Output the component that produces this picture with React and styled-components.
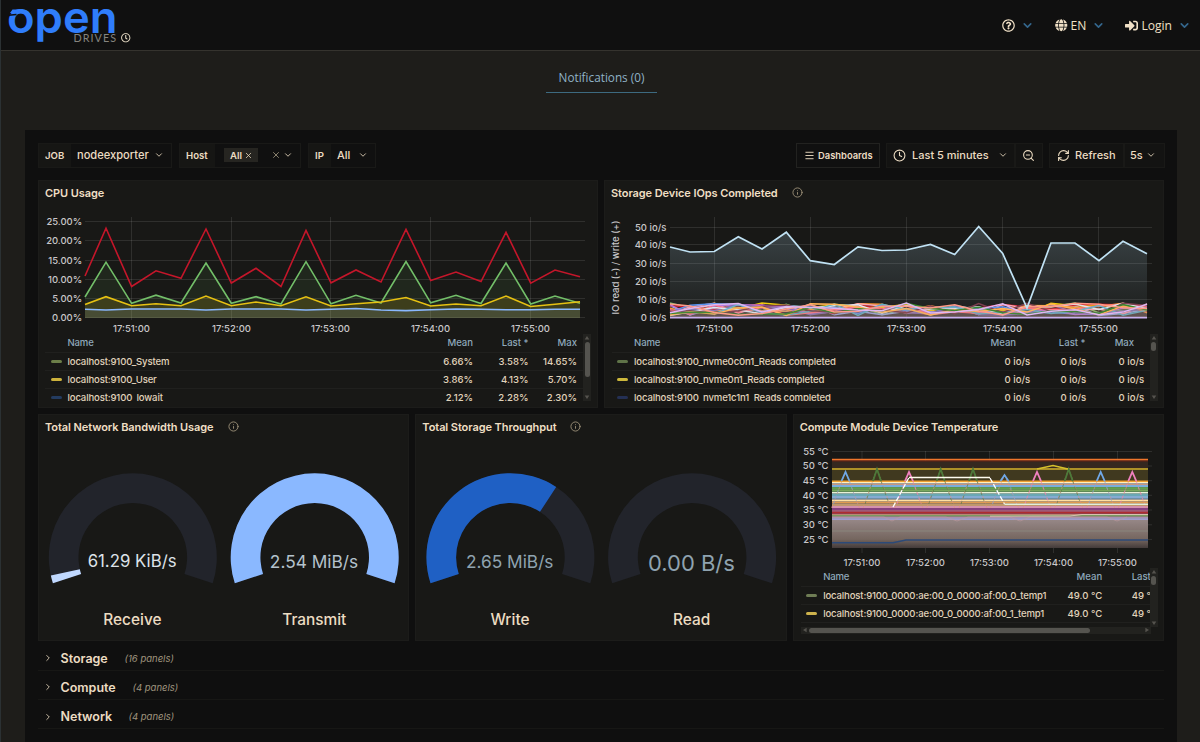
import React from "react";
import styled, { createGlobalStyle } from "styled-components";
import {
  FaRegQuestionCircle,
  FaGlobe,
  FaSignInAlt,
  FaRegClock,
} from "react-icons/fa";
import {
  ChevronDown,
  ChevronRight,
  Clock,
  Info,
  Menu,
  RefreshCw,
  X,
  ZoomOut,
} from "lucide-react";

const GlobalStyle = createGlobalStyle`
  * {
    box-sizing: border-box;
  }
  body {
    margin: 0;
    height: 742px;
    overflow: hidden;
    background: #1e1d1a;
    color: #e8d9bf;
    font-family: Inter, "Liberation Sans", sans-serif;
  }
  svg {
    display: block;
    flex: none;
  }
`;

const Page = styled.div`
  width: 1200px;
  height: 742px;
  overflow: hidden;
  display: flex;
  flex-direction: column;
  border-left: 1px solid #2b3133;
`;

const Header = styled.header`
  height: 51px;
  flex: none;
  display: flex;
  justify-content: space-between;
  background: #101010;
  border-bottom: 1px solid #35332e;
`;

const Brand = styled.div`
  display: flex;
`;

const LogoSvg = styled.svg`
  overflow: visible;
`;

const BrandClock = styled.div`
  padding-top: 33px;
  color: #efe3cc;
`;

const HeaderMenu = styled.nav`
  display: flex;
  align-items: center;
  height: 51px;
  padding-right: 9px;
  font-family: "Open Sans", "Noto Sans", sans-serif;
  font-size: 12.1px;
`;

const MenuItem = styled.div`
  display: flex;
  align-items: center;
  gap: ${(props) => props.$gap || 0}px;
  margin-left: ${(props) => props.$left || 0}px;
  color: #f0e0c6;
`;

const MenuChevron = styled(ChevronDown)`
  color: #34668c;
  margin-left: ${(props) => props.$left}px;
`;

const Tabs = styled.div`
  display: flex;
  justify-content: center;
  height: 79px;
  flex: none;
  padding: 15px 0 0 2px;
`;

const Tab = styled.div`
  width: 111px;
  height: 27px;
  padding-top: 2px;
  text-align: center;
  font: 11.75px/18px "Open Sans", "Noto Sans", sans-serif;
  color: #8fb2c6;
  border-bottom: 1px solid #3d6a80;
  white-space: nowrap;
`;

const Dashboard = styled.main`
  flex: 1;
  margin: 0 23px 0 24px;
  padding: 13px 12px 0 13px;
  background: #0f0f0f;
`;

const Toolbar = styled.div`
  display: flex;
  height: 25px;
  margin-bottom: 12px;
`;

const Control = styled.div`
  display: flex;
  align-items: center;
  height: 25px;
  width: ${(props) => props.$width}px;
  margin-left: ${(props) => props.$left || 0}px;
  padding-left: ${(props) => props.$pad || 0}px;
  padding-bottom: 1px;
  border: 1px solid ${(props) => props.$border || "#191917"};
  background: ${(props) => props.$bg || "#101010"};
  color: #ecdcc2;
  font-size: ${(props) => props.$size || 11}px;
  font-weight: ${(props) => props.$weight || 500};
  white-space: nowrap;
`;

const ControlLabel = styled.div`
  width: ${(props) => props.$width}px;
  height: 23px;
  padding-left: 6px;
  background: #161614;
  font-size: 9.6px;
  font-weight: 600;
  line-height: 23px;
`;

const ControlValue = styled.div`
  flex: 1;
  padding-left: ${(props) => props.$pad}px;
`;

const Chip = styled.div`
  display: flex;
  align-items: center;
  gap: 2px;
  width: 34px;
  height: 14px;
  margin: 0 13px 0 9px;
  padding-left: 6px;
  background: #262521;
  font-size: 9.6px;
  font-weight: 600;
`;

const Spacer = styled.div`
  flex: 1;
`;

const IconSlot = styled.div`
  margin-left: ${(props) => props.$left || 0}px;
  margin-right: ${(props) => props.$right || 0}px;
  color: ${(props) => props.$color || "inherit"};
`;

const PanelRow = styled.div`
  display: grid;
  grid-template-columns: repeat(${(props) => props.$cols}, 1fr);
  gap: 6px;
  width: 1126px;
  margin-bottom: ${(props) => props.$bottom}px;
`;

const PanelBox = styled.section`
  height: ${(props) => props.$height}px;
  min-width: 0;
  overflow: hidden;
  background: #181816;
  border: 1px solid #1c1c1a;
`;

const PanelTitle = styled.h2`
  display: flex;
  align-items: center;
  gap: 14px;
  height: 25px;
  margin: 0;
  padding: 0 0 2px 6px;
  font-size: 11px;
  font-weight: 600;
  letter-spacing: -0.08px;
  color: #efdfc4;
  svg {
    color: #9c9078;
  }
`;

const LegendArea = styled.div`
  display: flex;
  width: ${(props) => props.$width}px;
  height: ${(props) => props.$height}px;
  margin-left: ${(props) => props.$left || 6}px;
`;

const LegendTable = styled.div`
  flex: 1;
  min-width: 0;
  overflow: hidden;
`;

const LegendRow = styled.div`
  display: flex;
  align-items: center;
  height: ${(props) => (props.$head ? 18.6 : 18.2)}px;
  padding-left: 5.5px;
  border-bottom: 1px solid #20201e;
  font-size: 9.55px;
  font-weight: 500;
  color: ${(props) => (props.$head ? "#8fa9bb" : "#e0d3bb")};
  white-space: nowrap;
`;

const Swatch = styled.div`
  width: 11px;
  height: 3px;
  margin-right: 6px;
  border-radius: 2px;
  background: ${(props) => props.$color};
`;

const LegendName = styled.div`
  flex: 1;
  letter-spacing: -0.14px;
`;

const LegendCell = styled.div`
  flex: none;
  width: ${(props) => props.$width}px;
  padding-right: ${(props) => props.$pad || 0}px;
  text-align: ${(props) => props.$align || "right"};
`;

const ScrollTrack = styled.div`
  display: flex;
  flex-direction: ${(props) => (props.$horizontal ? "row" : "column")};
  align-items: center;
  justify-content: space-between;
  width: ${(props) => props.$width}px;
  height: ${(props) => props.$height}px;
  margin-left: ${(props) => props.$left || 0}px;
  background: #22221f;
  svg {
    fill: #55534e;
  }
`;

const ScrollThumb = styled.div`
  width: ${(props) => props.$width}px;
  height: ${(props) => props.$height}px;
  border-radius: 3px;
  background: #55544f;
`;

const CollapsedRow = styled.div`
  display: flex;
  align-items: center;
  width: 1126px;
  height: 29.3px;
  padding: 5px 0 0 5px;
  border-bottom: 1px solid #171715;
  font-size: 12.5px;
  font-weight: 600;
  color: #ecdcc2;
`;

const RowName = styled.span`
  width: ${(props) => props.$width}px;
  margin-left: 7.5px;
`;

const RowCount = styled.span`
  font-size: 9.5px;
  font-weight: 400;
  font-style: italic;
  color: #a0967f;
`;

const CPU_X = [
  85, 106, 131.6, 156, 181, 206, 231.3, 256, 281, 306, 331, 356, 381, 406,
  430.7, 456, 481, 506, 530.7, 555, 580,
];
const CPU_SERIES = [
  {
    color: "#c4162a",
    fill: "none",
    y: [
      276, 228.3, 286.5, 270.8, 278.3, 229, 283, 268.3, 286.5, 230.5, 282.8,
      270, 282, 229.3, 280.5, 272, 281.5, 232.3, 283.2, 270, 276.8,
    ],
  },
  {
    color: "#73bf69",
    fill: "#73bf6918",
    y: [
      297, 262.2, 303.3, 295.2, 303, 263, 303.3, 296.7, 304, 261.7, 303.8, 295.3,
      303, 261.5, 302.8, 295.3, 303.5, 263, 304, 296, 303.2,
    ],
  },
  {
    color: "#e6c112",
    fill: "#e6c11226",
    y: [
      304.5, 296.7, 305.8, 303.8, 305.8, 296, 305.8, 302, 305.8, 296.8, 306,
      303.7, 302, 297.5, 306, 304, 305.8, 296, 306.5, 304.3, 301.7,
    ],
  },
  {
    color: "#8ab8ff",
    fill: "#73899a33",
    y: [
      309.2, 310, 309, 309, 309, 310, 309, 309, 309, 310, 309.3, 308.5, 310,
      310.6, 309.8, 309, 309.2, 309.8, 309.7, 309.2, 309.2,
    ],
  },
];

const IO_X = [
  670, 690, 714.3, 738.3, 762, 786.3, 810.3, 834.3, 858, 882, 906.3, 930.5, 954.7,
  978.7, 1002.7, 1027, 1051, 1075, 1099, 1123, 1147,
];
const IO_MAIN = [
  247, 252, 251.5, 236.7, 249, 232.2, 260.7, 264.5, 246.8, 250.5, 250, 244.5,
  254.5, 226.5, 253.5, 308, 243, 243, 260.7, 241.3, 253.7,
];
const IO_COLORS = [
  "#73bf69",
  "#f2cc0c",
  "#8ab8ff",
  "#c4162a",
  "#ff9830",
  "#ffa6b0",
  "#5794f2",
  "#b877d9",
  "#806eb7",
  "#ff7383",
  "#e0e8f0",
  "#64b0c8",
  "#7c3f50",
  "#ffb357",
  "#37872d",
  "#ff9a86",
  "#deb6f2",
];

// small repeatable spread for the low traffic devices
const spread = (series, i) => {
  const n = Math.sin(series * 91.7 + i * 47.3) * 4375.5;
  return n - Math.floor(n);
};

const toPath = (xs, ys) =>
  xs.map((x, i) => `${i ? "L" : "M"}${x} ${ys[i]}`).join("");

const toArea = (xs, ys, base) =>
  `${toPath(xs, ys)}L${xs[xs.length - 1]} ${base}L${xs[0]} ${base}Z`;

const TIMES = ["17:51:00", "17:52:00", "17:53:00", "17:54:00", "17:55:00"];

function Axes({ left, right, top, bottom, xs, ys, labelX, labelY }) {
  return (
    <g>
      <g stroke="#ffffff" strokeOpacity="0.1">
        {ys.map(([y]) => (
          <path key={y} d={`M${left} ${y}H${right}`} />
        ))}
        {xs.map((x) => (
          <path key={x} d={`M${x} ${top}V${bottom}`} />
        ))}
      </g>
      <g fill="#c9c7c9" fontSize="9.5" fontWeight="500">
        {ys.map(([y, text]) => (
          <text key={text} x={labelX} y={y + 3.3} textAnchor="end">
            {text}
          </text>
        ))}
        {xs.map((x, i) => (
          <text key={x} x={x} y={labelY} textAnchor="middle">
            {TIMES[i]}
          </text>
        ))}
      </g>
    </g>
  );
}

function CpuChart() {
  return (
    <svg width="558" height="128" viewBox="39 206 558 128">
      <Axes
        left={85}
        right={585}
        top={217}
        bottom={320}
        xs={[131.5, 231.5, 330.5, 430.5, 530.5]}
        ys={[
          [221.5, "25.00%"],
          [240.5, "20.00%"],
          [260.5, "15.00%"],
          [279.5, "10.00%"],
          [298.5, "5.00%"],
          [317.5, "0.00%"],
        ]}
        labelX={82.2}
        labelY={332}
      />
      {CPU_SERIES.map((s) => (
        <g key={s.color}>
          <path d={toArea(CPU_X, s.y, 318)} fill={s.fill} />
          <path
            d={toPath(CPU_X, s.y)}
            fill="none"
            stroke={s.color}
            strokeWidth="1.6"
          />
        </g>
      ))}
    </svg>
  );
}

function IopsChart() {
  return (
    <svg width="558" height="128" viewBox="605 206 558 128">
      <defs>
        <linearGradient id="ioFill" x1="0" y1="0" x2="0" y2="1">
          <stop offset="0" stopColor="#a8cde0" stopOpacity="0.24" />
          <stop offset="1" stopColor="#a8cde0" stopOpacity="0.03" />
        </linearGradient>
      </defs>
      <Axes
        left={670}
        right={1152}
        top={217}
        bottom={320}
        xs={[714.5, 810.5, 906.5, 1002.5, 1098.5]}
        ys={[
          [227.5, "50 io/s"],
          [244.5, "40 io/s"],
          [263.5, "30 io/s"],
          [281.5, "20 io/s"],
          [299.5, "10 io/s"],
          [317.5, "0 io/s"],
        ]}
        labelX={666.3}
        labelY={332}
      />
      <text
        transform="translate(619 267.5) rotate(-90)"
        textAnchor="middle"
        fontSize="9.5"
        fontWeight="500"
        fill="#c9c7c9"
      >
        IO read (-) / write (+)
      </text>
      <path d={toArea(IO_X, IO_MAIN, 317.5)} fill="url(#ioFill)" />
      {IO_COLORS.map((color, s) => {
        const ys = IO_X.map((x, i) => 303 + spread(s, i) * 12.5);
        return (
          <g key={color}>
            <path d={toArea(IO_X, ys, 317.5)} fill={color} fillOpacity="0.04" />
            <path
              d={toPath(IO_X, ys)}
              fill="none"
              stroke={color}
              strokeWidth="1.5"
            />
          </g>
        );
      })}
      <path
        d={toPath(IO_X, IO_MAIN)}
        fill="none"
        stroke="#c0e2f4"
        strokeWidth="1.7"
      />
      <path d="M670 317.6H1147" stroke="#cbb2f0" strokeWidth="1.6" />
    </svg>
  );
}

const TEMP_BANDS = [
  [460.5, 8.5, "#35281f"],
  [469.5, 12, "#40391f"],
  [483, 4, "#6d8aa0"],
  [487, 6, "#5f8a55"],
  [493, 6, "#71918f"],
  [499, 7, "#a08060"],
  [506, 8, "#7b4a60"],
  [514, 5, "#7c7068"],
];

const TEMP_LINES = [
  [459.7, "#f0762c", 1.8],
  [461, "#6e1f14", 0.8],
  [469, "#d6b42c", 1.6],
  [481.2, "#f0a030", 1.4],
  [482.6, "#fff0c0", 1.2],
  [484.3, "#ff9f6a", 0.8],
  [486, "#7fb8f0", 1.6],
  [488.3, "#62a050", 1.4],
  [490.3, "#80b060", 1],
  [492.7, "#e8f0d8", 1.2],
  [495, "#69b0c0", 1.4],
  [497, "#8cb4e8", 1.6],
  [499, "#6c8dc0", 1],
  [500.5, "#ffe0a0", 1.3],
  [502.5, "#e09a50", 1.2],
  [505, "#c8a070", 1.4],
  [507, "#f0a8c8", 1.4],
  [509, "#8a3f8a", 1.6],
  [511, "#c06a8c", 1],
  [512.7, "#b02c30", 1.7],
  [514.6, "#cf9078", 0.8],
  [515.8, "#7a9a60", 1.4],
  [517.4, "#a890b0", 1.2],
  [519, "#a6a4e0", 1.6],
];

const SPIKES = [
  [845.5, 472, "#6fa8e8"],
  [877, 469, "#4d7a3a"],
  [909, 472, "#f080c0"],
  [940.7, 469, "#4d7a3a"],
  [973, 469, "#4d7a3a"],
  [1004.5, 475, "#6fa8e8"],
  [1037, 472, "#f080c0"],
  [1068.7, 469, "#4d7a3a"],
  [1100.7, 472, "#6fa8e8"],
  [1132.3, 472, "#f080c0"],
];

function TemperatureChart() {
  return (
    <svg width="369" height="128" viewBox="794 440 369 128">
      <defs>
        <linearGradient id="tempBase" x1="0" y1="0" x2="0" y2="1">
          <stop offset="0" stopColor="#978888" />
          <stop offset="0.7" stopColor="#75665f" />
          <stop offset="1" stopColor="#433b3a" />
        </linearGradient>
      </defs>
      <Axes
        left={832}
        right={1152}
        top={451}
        bottom={553}
        xs={[862, 925.5, 989.5, 1053.5, 1117.5]}
        ys={[
          [451.5, "55 °C"],
          [466, "50 °C"],
          [480.7, "45 °C"],
          [495.3, "40 °C"],
          [510, "35 °C"],
          [524.8, "30 °C"],
          [539.4, "25 °C"],
        ]}
        labelX={828.6}
        labelY={566}
      />
      {TEMP_BANDS.map(([y, h, color]) => (
        <rect key={y} x="832" y={y} width="316" height={h} fill={color} />
      ))}
      <rect x="832" y="519" width="316" height="29" fill="url(#tempBase)" />
      {TEMP_LINES.map(([y, color, w]) => (
        <path key={y} d={`M832 ${y}H1148`} stroke={color} strokeWidth={w} />
      ))}
      <g fill="none">
        {SPIKES.map(([x, y, color]) => (
          <g key={x}>
            <path
              d={`M${x - 14} 508L${x} ${y}L${x + 14} 508`}
              stroke="#e09080"
              strokeOpacity="0.6"
              strokeDasharray="3 2"
            />
            <path
              d={`M${x - 4} 481L${x} ${y}L${x + 4} 481`}
              stroke={color}
              strokeWidth="1.8"
            />
            <path
              d={`M${x - 12} 504L${x - 4} 481M${x + 4} 481L${x + 12} 504`}
              stroke={color}
              strokeOpacity="0.6"
              strokeDasharray="3 3"
            />
          </g>
        ))}
        <path d="M1037 469L1053 465.5L1068 469" stroke="#d6c02c" strokeWidth="1.4" />
        <path
          d="M893 507L909 477.5M990 478L1004.5 504"
          stroke="#fff"
          strokeWidth="1.3"
          strokeDasharray="5 2"
        />
        <path d="M909 477.5H990" stroke="#fffdf0" strokeWidth="1.5" />
        <path d="M1004.5 504.3H1148" stroke="#e4f0d8" strokeWidth="1.4" />
        <path
          d="M832 517L884 517L892 521L900 517L946 517L957 521L968 517L1010 517L1020 521L1030 517L1107 517L1117 521L1127 517"
          stroke="#c09aa0"
          strokeOpacity="0.6"
        />
        <path d="M990 516.2L1070 516L1082 514.5H1148" stroke="#d8c0b0" />
        <path d="M832 531H1148" stroke="#8f9a88" strokeOpacity="0.5" />
        <path
          d="M832 542.8H893L906 540H1148"
          stroke="#2c4a78"
          strokeWidth="1.6"
        />
      </g>
    </svg>
  );
}

const SWEEP = 216;

function point(cx, cy, r, deg) {
  const a = ((deg + 162) * Math.PI) / 180;
  return `${(cx + r * Math.cos(a)).toFixed(2)} ${(cy + r * Math.sin(a)).toFixed(2)}`;
}

function arc(cx, cy, from, to) {
  const big = to - from > 180 ? 1 : 0;
  return `M${point(cx, cy, 84, from)}A84 84 0 ${big} 1 ${point(cx, cy, 84, to)}L${point(cx, cy, 54.3, to)}A54.3 54.3 0 ${big} 0 ${point(cx, cy, 54.3, from)}Z`;
}

function Gauges({ items }) {
  return (
    <svg width="369" height="199" viewBox="0 1 369 199">
      {items.map((g) => (
        <g key={g.title} textAnchor="middle">
          <path d={arc(g.cx, 118.3, 0, SWEEP)} fill="#22242b" />
          {g.ratio > 0 && (
            <path d={arc(g.cx, 118.3, 0, SWEEP * g.ratio)} fill={g.color} />
          )}
          <text
            x={g.cx - 0.7}
            y={g.y}
            fontSize={g.size}
            fontWeight="400"
            fill={g.textColor}
          >
            {g.value}
          </text>
          <text
            x={g.cx - 0.4}
            y="185.5"
            fontSize="15.4"
            fontWeight="500"
            fill="#ecdcc2"
          >
            {g.title}
          </text>
        </g>
      ))}
    </svg>
  );
}

const NETWORK = [
  { cx: 93.8, title: "Receive", value: "61.29 KiB/s", ratio: 0.025, color: "#c0d8ff", textColor: "#dde2e8", size: 16.8, y: 128 },
  { cx: 275.7, title: "Transmit", value: "2.54 MiB/s", ratio: 1, color: "#8ab8ff", textColor: "#b4c2cc", size: 17.3, y: 129.3 },
];

const THROUGHPUT = [
  { cx: 94.4, title: "Write", value: "2.65 MiB/s", ratio: 0.653, color: "#1f60c4", textColor: "#8fa3b0", size: 17.3, y: 129.3 },
  { cx: 276.1, title: "Read", value: "0.00 B/s", ratio: 0, color: "#1f60c4", textColor: "#8fa3b0", size: 22, y: 131.5 },
];

function Arrow({ dir }) {
  const turn = { up: 0, right: 90, down: 180, left: 270 }[dir];
  return (
    <svg width="8" height="8" viewBox="0 0 8 8">
      <path d="M4 2L6.3 5.6H1.7Z" transform={`rotate(${turn} 4 4)`} />
    </svg>
  );
}

function Panel({ title, info, height, children }) {
  return (
    <PanelBox $height={height}>
      <PanelTitle>
        {title}
        {info && <Info size={11} strokeWidth={2} />}
      </PanelTitle>
      {children}
    </PanelBox>
  );
}

function Legend({ left, width, height, columns, rows, thumb }) {
  return (
    <LegendArea $left={left} $width={width} $height={height}>
      <LegendTable>
        <LegendRow $head>
          <Swatch />
          <LegendName>Name</LegendName>
          {columns.map((c) => (
            <LegendCell key={c.label} $width={c.width} $pad={c.headPad} $align={c.align}>
              {c.label}
            </LegendCell>
          ))}
        </LegendRow>
        {rows.map((row) => (
          <LegendRow key={row.name}>
            <Swatch $color={row.color} />
            <LegendName>{row.name}</LegendName>
            {columns.map((c, i) => (
              <LegendCell key={c.label} $width={c.width} $pad={c.pad} $align={c.align}>
                {row.values[i]}
              </LegendCell>
            ))}
          </LegendRow>
        ))}
      </LegendTable>
      <ScrollTrack $width={8} $height={height}>
        <Arrow dir="up" />
        <ScrollThumb $width={5} $height={thumb} />
        <Spacer />
        <Arrow dir="down" />
      </ScrollTrack>
    </LegendArea>
  );
}

function Logo() {
  return (
    <LogoSvg width="120" height="50" viewBox="1 0 120 50">
      <text
        x="7"
        y="32.8"
        textLength="110.5"
        lengthAdjust="spacingAndGlyphs"
        fontSize="44.5"
        fontWeight="600"
        fill="#2f7dfb"
      >
        open
      </text>
      <path d="M8.5 15.2L16.5 14.4" stroke="#101010" strokeWidth="1.5" />
      <path d="M12.5 9.6H22L20 13H10Z" fill="#2f7dfb" />
      <text
        x="73.5"
        y="42"
        textLength="42.5"
        fontFamily="Lato"
        fontSize="10.8"
        fill="#85847f"
      >
        DRIVES
      </text>
    </LogoSvg>
  );
}

function App() {
  return (
    <>
      <GlobalStyle />
      <Page>
        <Header>
          <Brand>
            <Logo />
            <BrandClock>
              <FaRegClock size={9.5} />
            </BrandClock>
          </Brand>
          <HeaderMenu>
            <MenuItem>
              <FaRegQuestionCircle size={13} />
              <MenuChevron size={13} strokeWidth={3} $left={6} />
            </MenuItem>
            <MenuItem $left={21} $gap={3}>
              <FaGlobe size={12.5} />
              EN
              <MenuChevron size={13} strokeWidth={3} $left={3} />
            </MenuItem>
            <MenuItem $left={20} $gap={3}>
              <FaSignInAlt size={13} />
              Login
              <MenuChevron size={13} strokeWidth={3} $left={3} />
            </MenuItem>
          </HeaderMenu>
        </Header>
        <Tabs>
          <Tab>Notifications (0)</Tab>
        </Tabs>
        <Dashboard>
          <Toolbar>
            <Control $width={134} $size={11.1}>
              <ControlLabel $width={32}>JOB</ControlLabel>
              <ControlValue $pad={6}>nodeexporter</ControlValue>
              <IconSlot $right={7}>
                <ChevronDown size={10} />
              </IconSlot>
            </Control>
            <Control $left={7} $width={122}>
              <ControlLabel $width={35}>Host</ControlLabel>
              <Chip>
                All
                <X size={9} />
              </Chip>
              <IconSlot $right={2} $color="#a0967f">
                <X size={10} />
              </IconSlot>
              <ChevronDown size={10} />
            </Control>
            <Control $left={7} $width={68}>
              <ControlLabel $width={22}>IP</ControlLabel>
              <ControlValue $pad={6}>All</ControlValue>
              <IconSlot $right={7}>
                <ChevronDown size={10} />
              </IconSlot>
            </Control>
            <Spacer />
            <Control $width={84} $pad={7} $size={9.4} $weight={600} $border="#222220">
              <IconSlot $right={3}>
                <Menu size={11} />
              </IconSlot>
              Dashboards
            </Control>
            <Control $left={6} $width={129} $pad={6} $bg="#131312">
              <IconSlot $right={6}>
                <Clock size={13} />
              </IconSlot>
              <ControlValue $pad={0}>Last 5 minutes</ControlValue>
              <IconSlot $right={6}>
                <ChevronDown size={10} />
              </IconSlot>
            </Control>
            <Control $width={28} $pad={6} $bg="#131312">
              <ZoomOut size={13} />
            </Control>
            <Control $left={6} $width={75} $pad={7} $bg="#131312">
              <IconSlot $right={5}>
                <RefreshCw size={13} />
              </IconSlot>
              Refresh
            </Control>
            <Control $width={41} $pad={5} $bg="#131312">
              5s
              <IconSlot $left={3}>
                <ChevronDown size={10} />
              </IconSlot>
            </Control>
          </Toolbar>
          <PanelRow $cols={2} $bottom={6}>
            <Panel title="CPU Usage" height={228}>
              <CpuChart />
              <Legend
                width={546}
                height={67}
                thumb={35}
                columns={[
                  { label: "Mean", width: 60 },
                  { label: "Last *", width: 55.5 },
                  { label: "Max", width: 54.5, pad: 6, headPad: 6 },
                ]}
                rows={[
                  { name: "localhost:9100_System", color: "#6c7f49", values: ["6.66%", "3.58%", "14.65%"] },
                  { name: "localhost:9100_User", color: "#cdb23c", values: ["3.86%", "4.13%", "5.70%"] },
                  { name: "localhost:9100_Iowait", color: "#243c60", values: ["2.12%", "2.28%", "2.30%"] },
                ]}
              />
            </Panel>
            <Panel title="Storage Device IOps Completed" info height={228}>
              <IopsChart />
              <Legend
                left={6.6}
                width={546}
                height={67}
                thumb={9}
                columns={[
                  { label: "Mean", width: 60, headPad: 14 },
                  { label: "Last *", width: 56, headPad: 0.5 },
                  { label: "Max", width: 63.5, pad: 5.5, headPad: 15.5 },
                ]}
                rows={[
                  { name: "localhost:9100_nvme0c0n1_Reads completed", color: "#5f7348", values: ["0 io/s", "0 io/s", "0 io/s"] },
                  { name: "localhost:9100_nvme0n1_Reads completed", color: "#cdb83c", values: ["0 io/s", "0 io/s", "0 io/s"] },
                  { name: "localhost:9100_nvme1c1n1_Reads completed", color: "#243054", values: ["0 io/s", "0 io/s", "0 io/s"] },
                ]}
              />
            </Panel>
          </PanelRow>
          <PanelRow $cols={3} $bottom={0.5}>
            <Panel title="Total Network Bandwidth Usage" info height={227}>
              <Gauges items={NETWORK} />
            </Panel>
            <Panel title="Total Storage Throughput" info height={227}>
              <Gauges items={THROUGHPUT} />
            </Panel>
            <Panel title="Compute Module Device Temperature" height={227}>
              <TemperatureChart />
              <Legend
                left={7}
                width={357}
                height={58.6}
                thumb={9}
                columns={[
                  { label: "Mean", width: 70, pad: 29.5, headPad: 29.5 },
                  { label: "Last *", width: 18, align: "left" },
                ]}
                rows={[
                  { name: "localhost:9100_0000:ae:00_0_0000:af:00_0_temp1", color: "#6f7d55", values: ["49.0 °C", "49 °C"] },
                  { name: "localhost:9100_0000:ae:00_0_0000:af:00_1_temp1", color: "#cdb24c", values: ["49.0 °C", "49 °C"] },
                ]}
              />
              <ScrollTrack $horizontal $left={7} $width={350} $height={7}>
                <Arrow dir="left" />
                <ScrollThumb $width={281} $height={5} />
                <Spacer />
                <Arrow dir="right" />
              </ScrollTrack>
            </Panel>
          </PanelRow>
          <CollapsedRow>
            <ChevronRight size={10} />
            <RowName $width={64}>Storage</RowName>
            <RowCount>(16 panels)</RowCount>
          </CollapsedRow>
          <CollapsedRow>
            <ChevronRight size={10} />
            <RowName $width={72}>Compute</RowName>
            <RowCount>(4 panels)</RowCount>
          </CollapsedRow>
          <CollapsedRow>
            <ChevronRight size={10} />
            <RowName $width={68}>Network</RowName>
            <RowCount>(4 panels)</RowCount>
          </CollapsedRow>
        </Dashboard>
      </Page>
    </>
  );
}

export default App;
